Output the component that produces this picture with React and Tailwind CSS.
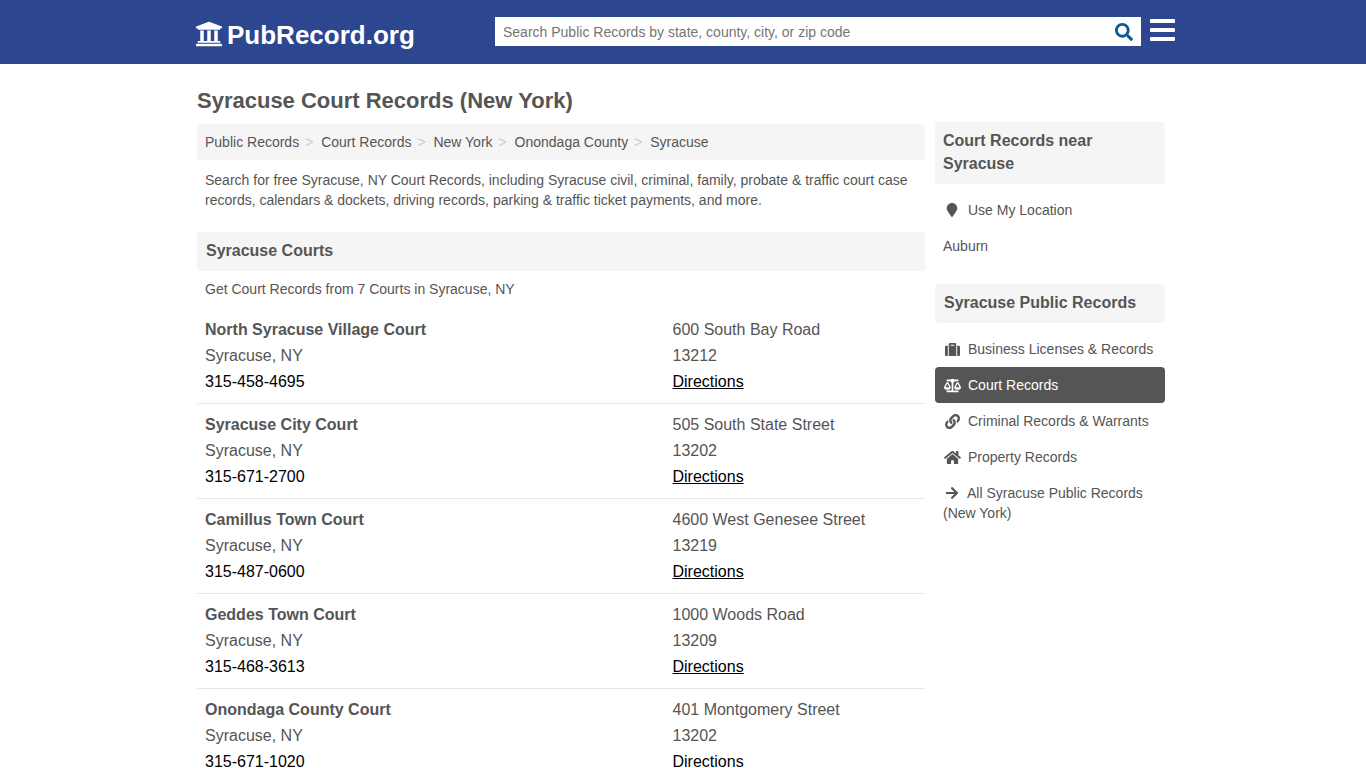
import React from "react";
import {
  FaUniversity,
  FaSearch,
  FaBars,
  FaMapMarker,
  FaSuitcase,
  FaBalanceScale,
  FaLink,
  FaHome,
  FaArrowRight,
} from "react-icons/fa";

const crumbs = ["Public Records", "Court Records", "New York", "Onondaga County", "Syracuse"];

const courts = [
  { name: "North Syracuse Village Court", city: "Syracuse, NY", phone: "315-458-4695", addr: "600 South Bay Road", zip: "13212" },
  { name: "Syracuse City Court", city: "Syracuse, NY", phone: "315-671-2700", addr: "505 South State Street", zip: "13202" },
  { name: "Camillus Town Court", city: "Syracuse, NY", phone: "315-487-0600", addr: "4600 West Genesee Street", zip: "13219" },
  { name: "Geddes Town Court", city: "Syracuse, NY", phone: "315-468-3613", addr: "1000 Woods Road", zip: "13209" },
  { name: "Onondaga County Court", city: "Syracuse, NY", phone: "315-671-1020", addr: "401 Montgomery Street", zip: "13202" },
];

const links = [
  { icon: FaSuitcase, label: "Business Licenses & Records" },
  { icon: FaBalanceScale, label: "Court Records", active: true },
  { icon: FaLink, label: "Criminal Records & Warrants" },
  { icon: FaHome, label: "Property Records" },
];

function App() {
  return (
    <div className="h-screen overflow-hidden bg-white text-[#555] font-['Liberation_Sans',Arial,sans-serif]">
      {/* header */}
      <div className="h-16 bg-[#2d4690]">
        <div className="w-[990px] ml-[195px] flex flex-row items-center h-full">
          <div className="w-[300px] flex flex-row items-center text-white">
            <FaUniversity className="w-[28px] h-[28px] mt-[4px]" />
            <span className="ml-[4px] font-bold text-[26px] leading-[30px] mt-[6px]">PubRecord.org</span>
          </div>
          <div className="flex flex-row items-center justify-between w-[646px] h-[29px] bg-white mt-[-1px]">
            <span className="pl-2 text-sm text-[#757575]">Search Public Records by state, county, city, or zip code</span>
            <FaSearch className="w-[18px] h-[18px] mr-[8px] text-[#0f5a96]" />
          </div>
          <FaBars className="ml-[9px] w-[25px] h-[30px] text-white mt-[-4px]" />
        </div>
      </div>

      <div className="ml-[197px] w-[968px]">
        <h1 className="mt-[23px] h-[37px] text-[22px] leading-[28px] font-bold">Syracuse Court Records (New York)</h1>

        <div className="flex flex-row gap-[10px]">
          {/* main column */}
          <div className="w-[728px]">
            <div className="flex flex-row items-center h-9 px-2 bg-[#f5f5f5] rounded text-sm">
              {crumbs.map((c, i) => (
                <React.Fragment key={c}>
                  <span>{c}</span>
                  {i < crumbs.length - 1 && <span className="w-[22px] pl-[6px] text-[#ccc]">&gt;</span>}
                </React.Fragment>
              ))}
            </div>
            <p className="mt-[10px] px-2 text-sm leading-5">
              Search for free Syracuse, NY Court Records, including Syracuse civil, criminal, family, probate &amp; traffic court case records, calendars &amp; dockets, driving records, parking &amp; traffic ticket payments, and more.
            </p>

            <div className="mt-[22px] flex items-center h-[39px] px-[9px] pb-[2px] bg-[#f5f5f5] rounded text-base font-bold">
              Syracuse Courts
            </div>
            <p className="mt-2 px-2 text-sm leading-5">Get Court Records from 7 Courts in Syracuse, NY</p>

            <div className="mt-[10px]">
              {courts.map((c) => (
                <div key={c.name} className="flex flex-row h-[95px] pt-[8px] px-2 border-b border-[#e7e7e7] text-base leading-[26px]">
                  <div className="w-[467.5px]">
                    <p className="font-bold">{c.name}</p>
                    <p>{c.city}</p>
                    <p className="text-black">{c.phone}</p>
                  </div>
                  <div>
                    <p>{c.addr}</p>
                    <p>{c.zip}</p>
                    <p className="text-black underline">Directions</p>
                  </div>
                </div>
              ))}
            </div>
          </div>

          {/* sidebar */}
          <div className="w-[230px] mt-[-2px] text-sm">
            <div className="px-2 py-[7px] h-[62px] bg-[#f5f5f5] rounded text-base font-bold leading-[23px]">
              Court Records near Syracuse
            </div>
            <div className="mt-2 flex flex-row items-center h-9 pl-[10px]">
              <FaMapMarker className="w-[14px] h-[14px]" />
              <span className="ml-[9px]">Use My Location</span>
            </div>
            <div className="flex items-center h-9 px-2">Auburn</div>

            <div className="mt-[20px] flex items-center h-[39px] px-[9px] pb-[2px] bg-[#f5f5f5] rounded text-base font-bold">
              Syracuse Public Records
            </div>
            <div className="mt-2">
              {links.map(({ icon: Icon, label, active }) => (
                <div
                  key={label}
                  className={
                    active
                      ? "flex flex-row items-center h-9 pl-2 bg-[#555] text-white rounded"
                      : "flex flex-row items-center h-9 pl-2"
                  }
                >
                  <span className="w-[25px] flex justify-center pr-[7px]">
                    <Icon className="w-[17px] h-[15px]" />
                  </span>
                  <span>{label}</span>
                </div>
              ))}
              <div className="px-2 pt-2 leading-5">
                <FaArrowRight className="inline-block w-[14px] h-[14px] ml-[2px] mr-[8px] mb-[2px]" />
                All Syracuse Public Records (New York)
              </div>
            </div>
          </div>
        </div>
      </div>
    </div>
  );
}

export default App;
